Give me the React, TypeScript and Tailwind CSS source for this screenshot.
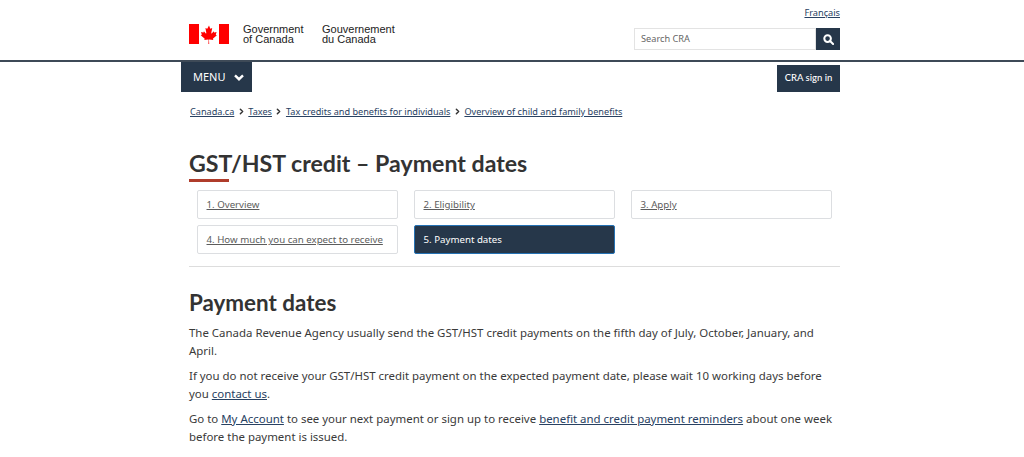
import { ChevronRight } from "lucide-react";

const Flag = () => (
  <svg width="40" height="20" viewBox="0 0 40 20" className="block">
    <rect x="0" y="0" width="10" height="20" fill="#ff0000" />
    <rect x="30" y="0" width="10" height="20" fill="#ff0000" />
    <path
      fill="#ff0000"
      d="M20 1.500l-1.600 3c-.2.3-.5.3-.8.1l-1.200-.6.9 4.700c.2.800-.4.800-.7.500l-1.700-1.900-.3 1c0 .1-.2.3-.4.3l-2.200-.5.6 2c.1.4.3.600-.1.800l-.8.4 3.800 3.100c.2.100.2.300.1.600l-.3 1.100 3.900-.5c.2 0 .4.100.4.300l-.2 4h.8l-.2-4c0-.2.2-.3.400-.3l3.900.5-.3-1.100c-.1-.3-.1-.5.100-.6l3.800-3.100-.8-.4c-.4-.2-.2-.4-.1-.8l.6-2-2.200.5c-.2 0-.4-.2-.4-.3l-.3-1-1.700 1.900c-.3.3-.9.300-.7-.5l.9-4.700-1.200.6c-.3.2-.6.200-.8-.1z"
    />
  </svg>
);

const Crumb = ({ children, first }: { children: string; first?: boolean }) => (
  <span className="flex items-center">
    {!first && <ChevronRight className="w-[9px] h-[9px] mx-[2.5px] text-[#333]" strokeWidth={4} />}
    <a className="text-[#284162] underline">{children}</a>
  </span>
);

const Step = ({ children, active }: { children: string; active?: boolean }) =>
  active ? (
    <div className="h-[29px] pl-[8.500px] pt-[2px] flex items-center whitespace-nowrap bg-[#26374a] border border-[#2572b4] rounded-[2px] text-white text-[9.7px]">
      {children}
    </div>
  ) : (
    <div className="h-[29px] pl-[8.500px] pt-[2px] flex items-center whitespace-nowrap bg-white border border-[#dcdee1] rounded-[2px] text-[#5c5c5c] underline text-[9.7px]">
      {children}
    </div>
  );

export default function App() {
  return (
    <div className="w-[1024px] h-[457px] overflow-hidden bg-white text-[#3a3a3a] font-['Noto_Sans',sans-serif]">
      <header className="h-[62px] border-b-2 border-[#3e4a57]">
        <div className="w-[651px] ml-[189px] flex justify-between">
          <div className="flex items-start pt-[24px]">
            <Flag />
            <div className="ml-[14px] font-['Liberation_Sans',sans-serif] text-[11px] leading-[10px] text-[#222] w-[79px]">
              Government<br />of Canada
            </div>
            <div className="font-['Liberation_Sans',sans-serif] text-[11px] leading-[10px] text-[#222]">
              Gouvernement<br />du Canada
            </div>
          </div>
          <div className="flex flex-col items-end pt-[6px]">
            <a className="text-[9.2px] leading-[13px] text-[#284162] underline">Français</a>
            <div className="flex mt-[9px] h-[22px]">
              <div className="w-[182px] bg-white border border-[#e3e3e3] pl-[6px] flex items-center text-[9.2px] text-[#666]">
                Search CRA
              </div>
              <div className="w-[24px] bg-[#26374a] flex items-center justify-center">
                <svg width="11" height="11" viewBox="0 0 12 12" fill="none" stroke="white" strokeWidth="2.2">
                  <circle cx="5" cy="5" r="3.6" />
                  <path d="M7.700 7.700L11 11" strokeLinecap="round" />
                </svg>
              </div>
            </div>
          </div>
        </div>
      </header>

      <nav className="w-[659px] ml-[181px] flex justify-between items-start">
        <div className="w-[71px] h-[30px] bg-[#26374a] text-white flex items-center pl-[12px] text-[11px]">
          MENU
          <svg width="10" height="7" viewBox="0 0 10 7" className="ml-[8px]" fill="none" stroke="white" strokeWidth="2.400">
            <path d="M1 1.300L5 5.200 9 1.300" />
          </svg>
        </div>
        <div className="mt-[3px] w-[63px] h-[27px] bg-[#26374a] text-white flex items-center justify-center text-[9.5px] font-['Lato',sans-serif] font-medium">
          CRA sign in
        </div>
      </nav>

      <div className="ml-[190px] mt-[13px] flex items-center text-[9.15px] leading-[13px]">
        <Crumb first>Canada.ca</Crumb>
        <Crumb>Taxes</Crumb>
        <Crumb>Tax credits and benefits for individuals</Crumb>
        <Crumb>Overview of child and family benefits</Crumb>
      </div>

      <main className="w-[651px] ml-[189px]">
        <h1 className="mt-[31px] font-['Lato',sans-serif] font-bold text-[23.15px] leading-[28px] text-[#333]">
          GST/HST credit – Payment dates
        </h1>
        <div className="w-[40px] h-[3px] bg-[#af3c2b] mt-[2px]" />
        <div className="mt-[8px] ml-[8px] w-[635px] grid grid-cols-[201px_201px_201px] gap-x-[16px] gap-y-[6px]">
          <Step>1. Overview</Step>
          <Step>2. Eligibility</Step>
          <Step>3. Apply</Step>
          <Step>4. How much you can expect to receive</Step>
          <Step active>5. Payment dates</Step>
        </div>
        <hr className="mt-[12px] border-t border-[#ddd]" />
        <h2 className="mt-[23px] font-['Lato',sans-serif] font-bold text-[22.4px] leading-[26px] text-[#333]">
          Payment dates
        </h2>
        <div className="mt-[8px] text-[11.45px] leading-[18px]">
          <p>
            The Canada Revenue Agency usually send the GST/HST credit payments on the fifth day of July, October, January, and April.
          </p>
          <p className="mt-[7px]">
            If you do not receive your GST/HST credit payment on the expected payment date, please wait 10 working days before you{" "}
            <a className="text-[#284162] underline">contact us</a>.
          </p>
          <p className="mt-[7px]">
            Go to <a className="text-[#284162] underline">My Account</a> to see your next payment or sign up to receive{" "}
            <a className="text-[#284162] underline">benefit and credit payment reminders</a> about one week before the payment is issued.
          </p>
        </div>
      </main>
    </div>
  );
}
